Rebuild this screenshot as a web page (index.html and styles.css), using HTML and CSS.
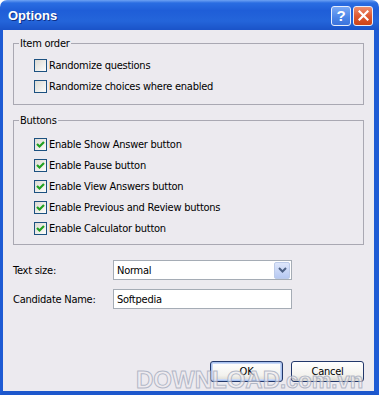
FILE: index.html
```html
<!DOCTYPE html>
<html lang="en">

<head>
    <meta charset="UTF-8">
    <title>Options</title>
    <link rel="stylesheet" href="styles.css">
</head>

<body>
    <div class="window">
        <div class="titlebar">
            <span class="title">Options</span>
            <div class="caption">
                <span class="cbtn help">?</span>
                <span class="cbtn close">
                    <svg width="11" height="11" viewBox="0 0 11 11">
                        <path d="M1.5 1.5 L9.5 9.5 M9.5 1.5 L1.5 9.5" stroke="#fff" stroke-width="2.2" stroke-linecap="square" />
                    </svg>
                </span>
            </div>
        </div>

        <div class="frame">
            <fieldset class="group order">
                <legend>Item order</legend>
                <div class="row"><span class="box"></span>Randomize questions</div>
                <div class="row"><span class="box"></span>Randomize choices where enabled</div>
            </fieldset>

            <fieldset class="group btns">
                <legend>Buttons</legend>
                <div class="row"><span class="box on"><svg width="11" height="11" viewBox="0 0 11 11"><path d="M2 5 L4.5 7.5 L9 3" fill="none" stroke="#21a121" stroke-width="2.2" /></svg></span>Enable Show Answer button</div>
                <div class="row"><span class="box on"><svg width="11" height="11" viewBox="0 0 11 11"><path d="M2 5 L4.5 7.5 L9 3" fill="none" stroke="#21a121" stroke-width="2.2" /></svg></span>Enable Pause button</div>
                <div class="row"><span class="box on"><svg width="11" height="11" viewBox="0 0 11 11"><path d="M2 5 L4.5 7.5 L9 3" fill="none" stroke="#21a121" stroke-width="2.2" /></svg></span>Enable View Answers button</div>
                <div class="row"><span class="box on"><svg width="11" height="11" viewBox="0 0 11 11"><path d="M2 5 L4.5 7.5 L9 3" fill="none" stroke="#21a121" stroke-width="2.2" /></svg></span>Enable Previous and Review buttons</div>
                <div class="row"><span class="box on"><svg width="11" height="11" viewBox="0 0 11 11"><path d="M2 5 L4.5 7.5 L9 3" fill="none" stroke="#21a121" stroke-width="2.2" /></svg></span>Enable Calculator button</div>
            </fieldset>

            <div class="form">
                <div class="field">
                    <span class="lbl">Text size:</span>
                    <div class="select">
                        <span class="val">Normal</span>
                        <span class="arrow">
                            <svg width="9" height="6" viewBox="0 0 9 6"><path d="M1 1 L4.5 4.5 L8 1" fill="none" stroke="#4d6185" stroke-width="2" /></svg>
                        </span>
                    </div>
                </div>
                <div class="field">
                    <span class="lbl">Candidate Name:</span>
                    <div class="input">Softpedia</div>
                </div>
            </div>

            <div class="actions">
                <button class="btn ok">OK</button>
                <button class="btn">Cancel</button>
            </div>
        </div>

        <div class="watermark">DOWNLOAD<span class="dom">.com.vn</span></div>
    </div>
</body>

</html>
```

FILE: styles.css
```css
* {
    box-sizing: border-box;
}

body {
    margin: 0;
    background: #fff;
    font-family: "DejaVu Sans", sans-serif;
    font-stretch: condensed;
    font-size: 11px;
    letter-spacing: -0.25px;
    color: #000;
}

.window {
    position: relative;
    width: 379px;
    height: 395px;
    display: flex;
    flex-direction: column;
}

.titlebar {
    height: 30px;
    display: flex;
    align-items: center;
    justify-content: space-between;
    padding: 0 6px 0 8px;
    border-radius: 7px 7px 0 0;
    background: linear-gradient(to bottom, #6ea2f3 0, #2a6de2 3px, #1f5ed8 35%, #2465da 70%, #1a53c8 100%);
}

.title {
    font-family: "Liberation Sans", sans-serif;
    font-stretch: normal;
    letter-spacing: 0;
    font-weight: bold;
    font-size: 13px;
    color: #fff;
    text-shadow: 1px 1px 0 #0f2f85;
    margin-top: 1px;
}

.caption {
    display: flex;
    gap: 2px;
    margin-top: 1px;
}

.cbtn {
    width: 20px;
    height: 20px;
    border: 1px solid #e8eefc;
    border-radius: 3px;
    display: flex;
    align-items: center;
    justify-content: center;
    color: #fff;
    font-family: "Liberation Sans", sans-serif;
    font-weight: bold;
    font-size: 15px;
}

.help {
    background: linear-gradient(to bottom, #7aa9f5, #4a84e8 60%, #3b73dc);
}

.close {
    background: linear-gradient(to bottom, #ee8f6f, #df5a32 50%, #cc4317);
}

.frame {
    flex: 1;
    display: flex;
    flex-direction: column;
    background: #eceaef;
    border-left: 3px solid #1e5bd4;
    border-right: 5px solid #1e5bd4;
    border-bottom: 4px solid #1d57cc;
    padding: 7px 10px 9px 10px;
}

.group {
    margin: 0;
    padding: 5px 0 7px 0;
    min-width: 0;
    border: 1px solid #a9a8b2;
}

.group legend {
    margin-left: 5px;
    padding: 0 1px;
    line-height: 13px;
}

.btns {
    margin-top: 9px;
    padding: 7px 0 5px 0;
}

.row {
    height: 21px;
    display: flex;
    align-items: center;
    gap: 2px;
    margin-left: 20px;
}

.box {
    width: 13px;
    height: 13px;
    border: 1px solid #1c5180;
    background: linear-gradient(135deg, #dcdad3, #fdfdfb);
    display: flex;
    align-items: center;
    justify-content: center;
}

.form {
    margin-top: 15px;
    display: flex;
    flex-direction: column;
    gap: 9px;
}

.field {
    display: flex;
    align-items: center;
    height: 20px;
}

.lbl {
    width: 100px;
}

.select,
.input {
    width: 179px;
    height: 20px;
    background: #fff;
    border: 1px solid #a5acb5;
    display: flex;
    align-items: center;
    padding-left: 3px;
}

.select {
    justify-content: space-between;
    padding-right: 1px;
}

.arrow {
    width: 16px;
    height: 17px;
    border: 1px solid #bccbe9;
    border-radius: 2px;
    background: linear-gradient(to bottom, #dde6fb, #b7c9f2);
    display: flex;
    align-items: center;
    justify-content: center;
}

.actions {
    margin-top: auto;
    display: flex;
    justify-content: flex-end;
    gap: 8px;
}

.btn {
    width: 73px;
    height: 21px;
    font: inherit;
    letter-spacing: inherit;
    color: #000;
    border: 1px solid #23386b;
    border-radius: 3px;
    background: linear-gradient(to bottom, #ffffff, #f3f2ee 70%, #d9d7cf);
    padding: 0;
}

.ok {
    box-shadow: inset 0 0 0 1px #a9c2ef, inset 0 0 0 2px #c9d8f6;
}

.watermark {
    position: absolute;
    left: 136px;
    bottom: 1px;
    font-family: "Liberation Sans", sans-serif;
    font-stretch: normal;
    letter-spacing: 0;
    font-weight: bold;
    font-size: 24px;
    line-height: 26px;
    color: rgba(240, 236, 240, 0.6);
    -webkit-text-stroke: 1px rgba(150, 160, 180, 0.7);
    pointer-events: none;
}

.dom {
    font-size: 22px;
}
```
